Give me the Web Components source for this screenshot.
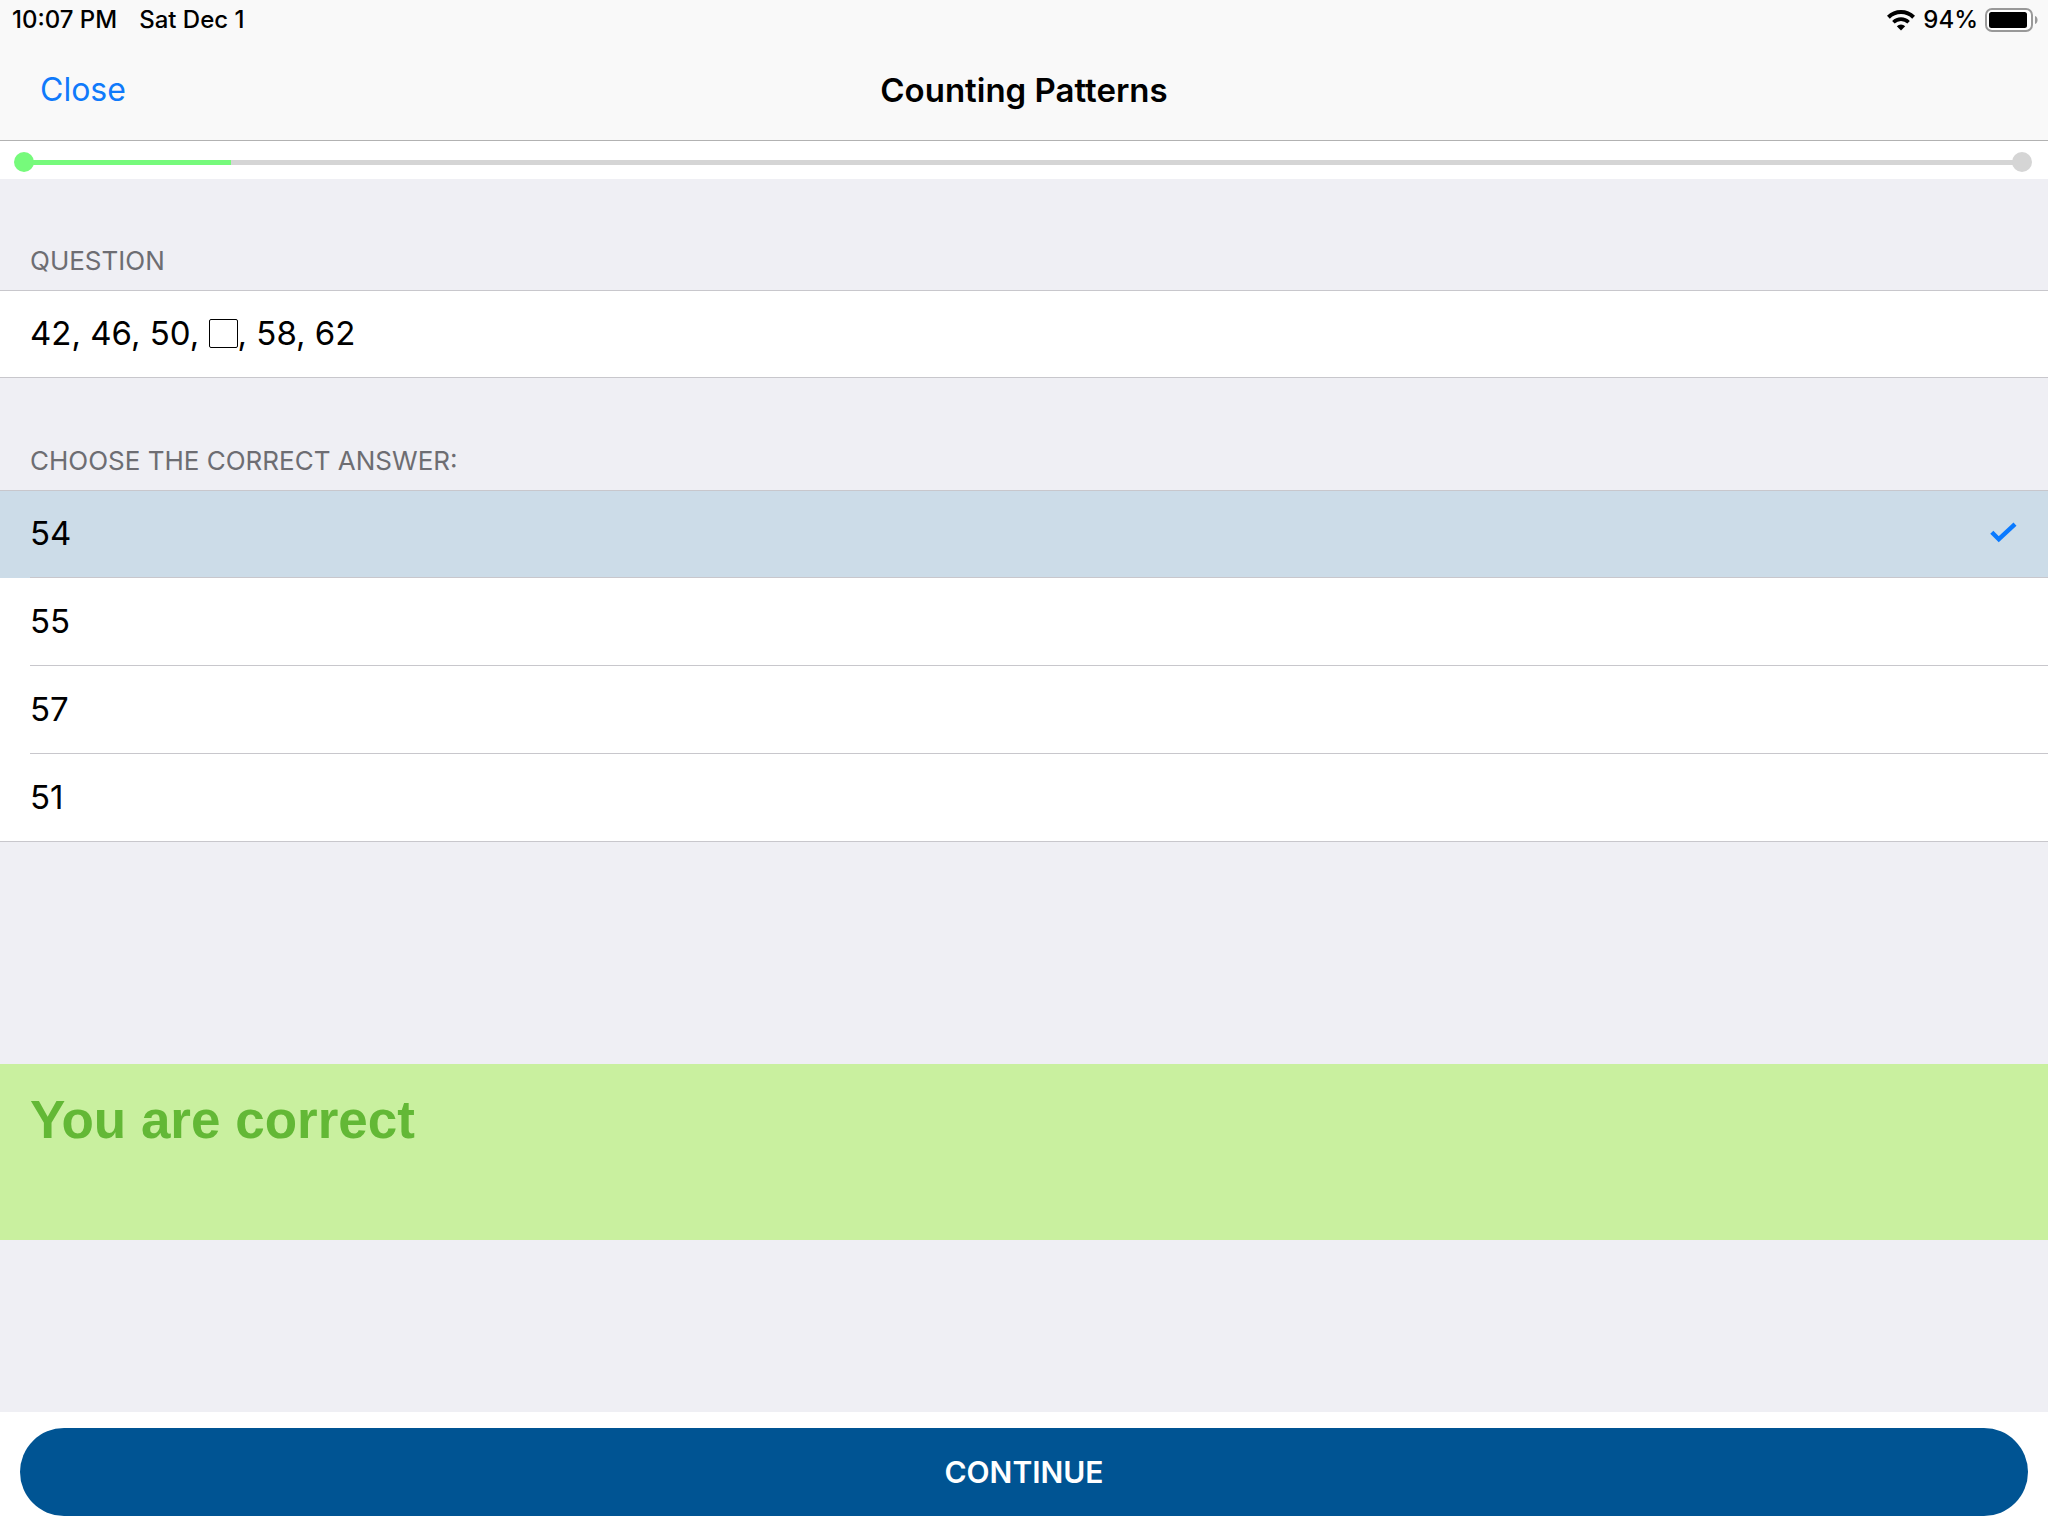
<!DOCTYPE html>
<html lang="en">
<head>
<meta charset="utf-8">
<meta name="viewport" content="width=device-width, initial-scale=1">
<title>Counting Patterns</title>
<style>
body { margin: 0; font-family: Inter, "Liberation Sans", sans-serif; color: #000; background: #efeff4; }
</style>
</head>
<body>
<quiz-page>
  <quiz-header slot="header" heading="Counting Patterns">
    <status-bar time="10:07 PM" date="Sat Dec 1" battery="94%"></status-bar>
  </quiz-header>
  <quiz-progress slot="header" value="10"></quiz-progress>
  <quiz-section heading="QUESTION">
    <quiz-question>42, 46, 50, <answer-blank></answer-blank>, 58, 62</quiz-question>
  </quiz-section>
  <quiz-section heading="CHOOSE THE CORRECT ANSWER:">
    <answer-list options="54,55,57,51" selected="54"></answer-list>
  </quiz-section>
  <quiz-feedback>You are correct</quiz-feedback>
  <quiz-footer slot="footer">CONTINUE</quiz-footer>
</quiz-page>
<script>
class BaseElement extends HTMLElement {
  connectedCallback() {
    if (this.shadowRoot) return;
    this.attachShadow({ mode: 'open' }).innerHTML =
      '<style>*{box-sizing:border-box}</style>' + this.render();
  }
  attr(name) { return this.getAttribute(name) || ''; }
}

customElements.define('quiz-page', class extends BaseElement {
  render() {
    return `<style>
      :host { display: flex; flex-direction: column; min-height: 100vh; }
      main { flex: 1; display: flex; flex-direction: column; gap: 1px; }
    </style>
    <slot name="header"></slot><main><slot></slot></main><slot name="footer"></slot>`;
  }
});

customElements.define('status-bar', class extends BaseElement {
  render() {
    return `<style>
      :host { display: flex; justify-content: space-between; align-items: center; height: 40px; padding: 0 10px 0 12px; font-size: 24px; line-height: 40px; font-weight: 500; }
      div { display: flex; align-items: center; }
      .left { gap: 22px; }
      .right { gap: 7px; }
      svg { display: block; }
    </style>
    <div class="left"><span>${this.attr('time')}</span><span>${this.attr('date')}</span></div>
    <div class="right">
      <svg width="30" height="22" viewBox="0 0 30 22" aria-hidden="true">
        <g fill="none" stroke="#000" stroke-width="4">
          <path d="M2.4 8.2a18 18 0 0 1 25.2 0"/>
          <path d="M7.4 13.2a11 11 0 0 1 15.2 0" stroke-width="3.6"/>
        </g>
        <path d="M15 21.4l-4.2-4.2a6.2 6.2 0 0 1 8.4 0z"/>
      </svg>
      <span>${this.attr('battery')}</span>
      <svg width="53" height="24" viewBox="0 0 53 24" aria-hidden="true">
        <rect x="1" y="1" width="46" height="22" rx="6" fill="#fff" stroke="#999" stroke-width="2"/>
        <rect x="4" y="4" width="38" height="16" rx="2.5"/>
        <path d="M50 8c3.4 1 3.4 7 0 8z" fill="#999"/>
      </svg>
    </div>`;
  }
});

customElements.define('quiz-header', class extends BaseElement {
  render() {
    return `<style>
      :host { display: block; background: #f9f9f9; border-bottom: 1px solid #b2b2b2; }
      nav { display: grid; grid-template-columns: 1fr auto 1fr; align-items: center; height: 100px; padding: 0 40px; }
      button { justify-self: start; border: 0; padding: 0; background: none; font: inherit; font-size: 32px; line-height: 40px; color: #0f7afb; cursor: pointer; }
      h1 { margin: 0; font-size: 33px; line-height: 40px; font-weight: 600; }
    </style>
    <slot></slot>
    <nav><button type="button">Close</button><h1>${this.attr('heading')}</h1></nav>`;
  }
});

customElements.define('quiz-progress', class extends BaseElement {
  render() {
    const v = this.attr('value');
    return `<style>
      :host { display: block; background: #fff; padding: 11px 16px 7px 14px; }
      .bar { display: flex; align-items: center; height: 20px; }
      .dot { width: 20px; height: 20px; border-radius: 50%; background: #d5d5d5; }
      .track { flex: 1; height: 5px; margin: 0 -1px; background: #d5d5d5; }
      .fill { height: 5px; width: ${v}%; background: #76fa7b; }
      .done { background: #76fa7b; }
    </style>
    <div class="bar" role="progressbar" aria-valuenow="${v}" aria-valuemin="0" aria-valuemax="100" aria-label="Progress">
      <div class="dot done"></div><div class="track"><div class="fill"></div></div><div class="dot"></div>
    </div>`;
  }
});

customElements.define('quiz-section', class extends BaseElement {
  render() {
    return `<style>
      :host { display: block; }
      h2 { margin: 0; padding: 66px 30px 13px; font-size: 26px; line-height: 32px; font-weight: 400; color: #6d6d72; }
      .body { background: #fff; border: solid #c8c7cc; border-width: 1px 0; }
    </style>
    <h2>${this.attr('heading')}</h2><div class="body"><slot></slot></div>`;
  }
});

customElements.define('quiz-question', class extends BaseElement {
  render() {
    return `<style>
      :host { display: block; padding: 22px 30px 24px; font-size: 33px; line-height: 40px; }
    </style><slot></slot>`;
  }
});

customElements.define('answer-blank', class extends BaseElement {
  render() {
    return `<style>
      :host { display: inline-block; width: 29px; height: 29px; border: 1px solid #000; border-radius: 2px; vertical-align: -3px; box-sizing: border-box; }
    </style>`;
  }
});

customElements.define('answer-list', class extends BaseElement {
  render() {
    const rows = this.attr('options').split(',').map(o => `
      <label><input type="radio" name="answer" value="${o}" ${o === this.attr('selected') ? 'checked' : ''}>
        <span class="row"><span>${o}</span>
        <svg width="28" height="22" viewBox="0 0 28 22" aria-hidden="true"><path d="M1.8 10.2l7 7L25 2.2" fill="none" stroke="#0a7aff" stroke-width="4.4"/></svg></span>
      </label>`).join('');
    return `<style>
      :host { display: block; font-size: 33px; line-height: 40px; }
      label { display: block; padding-left: 30px; cursor: pointer; }
      input { appearance: none; position: absolute; margin: 0; width: 1px; height: 1px; opacity: 0; }
      .row { display: flex; justify-content: space-between; align-items: center; height: 88px; padding: 0 30px 2px 0; border-bottom: 1px solid #c8c7cc; }
      label:first-child .row { height: 87px; }
      label:last-child .row { height: 87px; border-bottom: 0; }
      svg { display: none; }
      label:has(:checked) { background: #ccdce8; }
      :checked + .row svg { display: block; }
    </style><div role="radiogroup" aria-label="Answers">${rows}</div>`;
  }
});

customElements.define('quiz-feedback', class extends BaseElement {
  render() {
    return `<style>
      :host { display: block; margin-top: 221px; min-height: 176px; padding: 26px 30px; box-sizing: border-box; background: #c9f09f; color: #63b836; font: bold 53px/60px "Liberation Sans", sans-serif; }
      p { margin: 0; }
    </style><p><slot></slot></p>`;
  }
});

customElements.define('quiz-footer', class extends BaseElement {
  render() {
    return `<style>
      :host { display: block; padding: 16px 20px 20px; background: #fff; }
      button { display: block; width: 100%; height: 88px; border: 0; padding: 0; border-radius: 44px; background: #005493; color: #fff; font: inherit; font-size: 30px; line-height: 36px; font-weight: 600; cursor: pointer; }
    </style><button type="button"><slot></slot></button>`;
  }
});
</script>
</body>
</html>
